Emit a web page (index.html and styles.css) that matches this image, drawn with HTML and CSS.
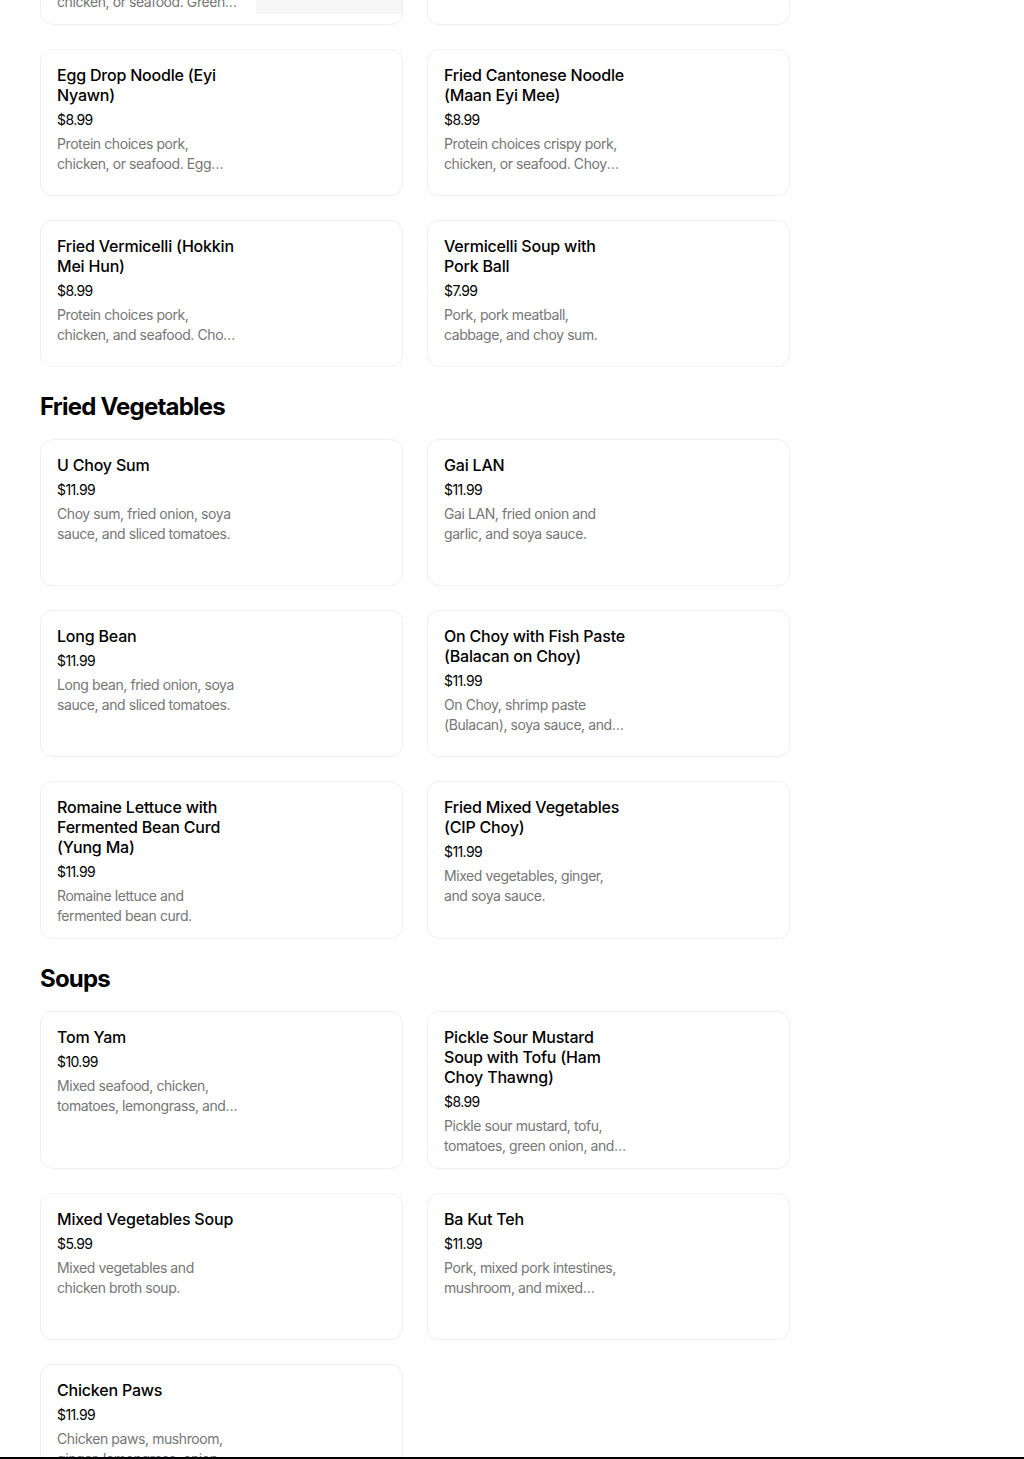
FILE: index.html
```html
<!DOCTYPE html>
<html lang="en">
<head>
<meta charset="utf-8">
<title>Menu</title>
<link rel="stylesheet" href="styles.css">
</head>
<body>
<main class="menu">
  <section class="section">
    <div class="grid">
      <div class="card">
        <div class="info">
          <h3 class="title">Fried Flat Rice Noodle with Green Onion (Chow Fun)</h3>
          <div class="price">$8.99</div>
          <p class="desc">Protein choices pork, chicken, or seafood. Green onion, bean sprouts, and soya sauce.</p>
        </div>
        <div class="thumb"></div>
      </div>
      <div class="card">
        <div class="info">
          <h3 class="title">Fried Rice Noodle</h3>
          <div class="price">$8.99</div>
          <p class="desc">Protein choices pork, chicken, or seafood.</p>
        </div>
      </div>
      <div class="card">
        <div class="info">
          <h3 class="title">Egg Drop Noodle (Eyi Nyawn)</h3>
          <div class="price">$8.99</div>
          <p class="desc">Protein choices pork, chicken, or seafood. Egg drop gravy with choy sum.</p>
        </div>
      </div>
      <div class="card">
        <div class="info">
          <h3 class="title">Fried Cantonese Noodle (Maan Eyi Mee)</h3>
          <div class="price">$8.99</div>
          <p class="desc">Protein choices crispy pork, chicken, or seafood. Choy sum and gravy.</p>
        </div>
      </div>
      <div class="card">
        <div class="info">
          <h3 class="title">Fried Vermicelli (Hokkin Mei Hun)</h3>
          <div class="price">$8.99</div>
          <p class="desc">Protein choices pork, chicken, and seafood. Choy sum, egg, and bean sprouts.</p>
        </div>
      </div>
      <div class="card">
        <div class="info">
          <h3 class="title">Vermicelli Soup with Pork Ball</h3>
          <div class="price">$7.99</div>
          <p class="desc">Pork, pork meatball, cabbage, and choy sum.</p>
        </div>
      </div>
    </div>
  </section>

  <section class="section">
    <h2 class="heading">Fried Vegetables</h2>
    <div class="grid">
      <div class="card">
        <div class="info">
          <h3 class="title">U Choy Sum</h3>
          <div class="price">$11.99</div>
          <p class="desc">Choy sum, fried onion, soya sauce, and sliced tomatoes.</p>
        </div>
      </div>
      <div class="card">
        <div class="info">
          <h3 class="title">Gai LAN</h3>
          <div class="price">$11.99</div>
          <p class="desc">Gai LAN, fried onion and garlic, and soya sauce.</p>
        </div>
      </div>
      <div class="card">
        <div class="info">
          <h3 class="title">Long Bean</h3>
          <div class="price">$11.99</div>
          <p class="desc">Long bean, fried onion, soya sauce, and sliced tomatoes.</p>
        </div>
      </div>
      <div class="card">
        <div class="info">
          <h3 class="title">On Choy with Fish Paste (Balacan on Choy)</h3>
          <div class="price">$11.99</div>
          <p class="desc">On Choy, shrimp paste (Bulacan), soya sauce, and fried garlic.</p>
        </div>
      </div>
      <div class="card">
        <div class="info">
          <h3 class="title">Romaine Lettuce with Fermented Bean Curd (Yung Ma)</h3>
          <div class="price">$11.99</div>
          <p class="desc">Romaine lettuce and fermented bean curd.</p>
        </div>
      </div>
      <div class="card">
        <div class="info">
          <h3 class="title">Fried Mixed Vegetables (CIP Choy)</h3>
          <div class="price">$11.99</div>
          <p class="desc">Mixed vegetables, ginger, and soya sauce.</p>
        </div>
      </div>
    </div>
  </section>

  <section class="section">
    <h2 class="heading">Soups</h2>
    <div class="grid">
      <div class="card">
        <div class="info">
          <h3 class="title">Tom Yam</h3>
          <div class="price">$10.99</div>
          <p class="desc">Mixed seafood, chicken, tomatoes, lemongrass, and lime leaves.</p>
        </div>
      </div>
      <div class="card">
        <div class="info">
          <h3 class="title">Pickle Sour Mustard Soup with Tofu (Ham Choy Thawng)</h3>
          <div class="price">$8.99</div>
          <p class="desc">Pickle sour mustard, tofu, tomatoes, green onion, and pork.</p>
        </div>
      </div>
      <div class="card">
        <div class="info">
          <h3 class="title">Mixed Vegetables Soup</h3>
          <div class="price">$5.99</div>
          <p class="desc">Mixed vegetables and chicken broth soup.</p>
        </div>
      </div>
      <div class="card">
        <div class="info">
          <h3 class="title">Ba Kut Teh</h3>
          <div class="price">$11.99</div>
          <p class="desc">Pork, mixed pork intestines, mushroom, and mixed vegetables in herbal broth.</p>
        </div>
      </div>
      <div class="card">
        <div class="info">
          <h3 class="title">Chicken Paws</h3>
          <div class="price">$11.99</div>
          <p class="desc">Chicken paws, mushroom, ginger, lemongrass, onion, and herbs.</p>
        </div>
      </div>
    </div>
  </section>
</main>
<div class="bottom-rule"></div>
</body>
</html>
```

FILE: styles.css
```css
* {
  box-sizing: border-box;
}

html, body {
  margin: 0;
  padding: 0;
  background: #ffffff;
}

body {
  font-family: Inter, "Noto Sans", "Liberation Sans", sans-serif;
  color: #000000;
  overflow: hidden;
}

.menu {
  width: 750px;
  margin: -133px 0 0 40px;
}

.section + .section {
  margin-top: 24px;
}

.heading {
  margin: 0 0 16px 0;
  font-size: 24px;
  line-height: 32px;
  font-weight: 700;
  letter-spacing: -0.8px;
}

.grid {
  display: grid;
  grid-template-columns: 1fr 1fr;
  column-gap: 24px;
  row-gap: 24px;
}

.card {
  display: grid;
  grid-template-columns: 1fr 146px;
  min-height: 147px;
  border: 1px solid #f0f0f0;
  border-radius: 12px;
  background: #ffffff;
  overflow: hidden;
}

.info {
  padding: 15px 14px 12px 16px;
  min-width: 0;
}

.thumb {
  grid-column: 2;
  grid-row: 1;
  width: 146px;
  height: 146px;
  background: #f6f6f6;
}

.title {
  margin: 0;
  font-size: 16px;
  line-height: 20px;
  font-weight: 500;
  letter-spacing: -0.2px;
}

.price {
  margin-top: 5px;
  font-size: 14px;
  line-height: 20px;
  font-weight: 400;
  letter-spacing: -0.6px;
}

.desc {
  margin: 4px 0 0 0;
  font-size: 14px;
  line-height: 20px;
  color: #767676;
  letter-spacing: -0.42px;
  display: -webkit-box;
  -webkit-line-clamp: 2;
  -webkit-box-orient: vertical;
  overflow: hidden;
}

.bottom-rule {
  position: fixed;
  left: 0;
  right: 0;
  bottom: 0;
  height: 2px;
  background: #000000;
}
```
